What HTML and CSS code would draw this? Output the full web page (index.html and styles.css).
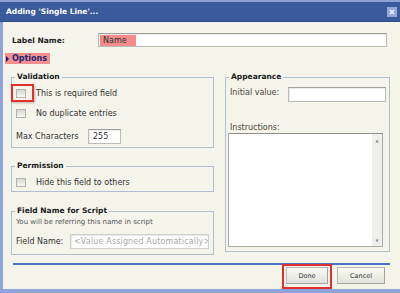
FILE: index.html
```html
<!DOCTYPE html>
<html lang="en">
<head>
    <meta charset="UTF-8">
    <title>Adding 'Single Line'...</title>
    <link rel="stylesheet" href="styles.css">
</head>
<body>

    <div class="dialog">
        <!-- Title bar -->
        <div class="titlebar">
            <span class="title">Adding 'Single Line'...</span>
            <span class="close">
                <svg width="10" height="10" viewBox="0 0 10 10">
                    <rect x="0" y="0" width="10" height="10" fill="#96a8d9"/>
                    <path d="M3 3 L7 7 M7 3 L3 7" stroke="#eef2ff" stroke-width="1.4"/>
                </svg>
            </span>
        </div>

        <div class="main">
            <div class="label-row">
                <span class="label-name">Label Name:</span>
                <div class="text-input wide"><span class="hl">Name</span></div>
            </div>

            <div class="options"><span class="arrow"></span>Options</div>

            <div class="columns">
                <div class="col">
                    <fieldset class="validation">
                        <legend>Validation</legend>
                        <div class="check-row first">
                            <span class="checkbox marked"></span>
                            <span>This is required field</span>
                        </div>
                        <div class="check-row second">
                            <span class="checkbox"></span>
                            <span>No duplicate entries</span>
                        </div>
                        <div class="field-row max">
                            <span>Max Characters</span>
                            <div class="text-input short">255</div>
                        </div>
                    </fieldset>

                    <fieldset class="permission">
                        <legend>Permission</legend>
                        <div class="check-row first">
                            <span class="checkbox"></span>
                            <span>Hide this field to others</span>
                        </div>
                    </fieldset>

                    <fieldset class="script">
                        <legend>Field Name for Script</legend>
                        <div class="hint">You will be referring this name in script</div>
                        <div class="field-row fname">
                            <span>Field Name:</span>
                            <div class="text-input auto"><span class="placeholder">&lt;Value Assigned Automatically&gt;</span></div>
                        </div>
                    </fieldset>
                </div>

                <fieldset class="appearance">
                    <legend>Appearance</legend>
                    <div class="field-row initial">
                        <span>Initial value:</span>
                        <div class="text-input init"></div>
                    </div>
                    <div class="instr-label">Instructions:</div>
                    <div class="textarea">
                        <div class="ta-body"></div>
                        <div class="scrollbar">
                            <span>&#9650;</span>
                            <span>&#9660;</span>
                        </div>
                    </div>
                </fieldset>
            </div>

            <div class="footer">
                <div class="separator"></div>
                <div class="buttons">
                    <button class="btn done">Done</button>
                    <button class="btn cancel">Cancel</button>
                </div>
            </div>
        </div>
    </div>

</body>
</html>
```

FILE: styles.css
```css
body {
    margin: 0;
    width: 400px;
    height: 293px;
    overflow: hidden;
    font-family: "DejaVu Sans", Verdana, sans-serif;
    font-size: 8px;
    color: #333;
}

.dialog {
    display: flex;
    flex-direction: column;
    height: 293px;
}

/* Title bar */
.titlebar {
    height: 19px;
    border-top: 2px solid #8ea1d6;
    border-bottom: 1px solid #2e4b8a;
    background-color: #3b5a9b;
    display: flex;
    align-items: center;
    justify-content: space-between;
    padding: 0 3px 0 6px;
}

.title {
    color: #ffffff;
    font-weight: bold;
    font-size: 7.5px;
}

.close {
    display: flex;
    margin-top: 1px;
}

/* Body */
.main {
    flex: 1;
    background-color: #f4f4ea;
    border-left: 3px solid #8fa2d9;
    border-bottom: 4px solid #8fa2d9;
    padding: 0 11px 0 8px;
    display: flex;
    flex-direction: column;
}

.label-row {
    display: flex;
    align-items: center;
    margin-top: 11px;
    height: 14px;
}

.label-name {
    font-weight: bold;
    font-size: 7.5px;
    color: #222;
    width: 86px;
    padding-left: 1px;
}

.text-input {
    box-sizing: border-box;
    background-color: #ffffff;
    border: 1px solid #bdbdb8;
    border-top-color: #9e9e9a;
    box-shadow: inset 1px 1px 0 #ebebeb;
    display: flex;
    align-items: center;
    overflow: hidden;
    white-space: nowrap;
    padding-left: 3px;
}

.text-input.wide {
    width: 289px;
    height: 14px;
    padding: 1px 0 0 1px;
    align-items: stretch;
}

.hl {
    background-color: #f28c8c;
    width: 33px;
    padding-left: 3px;
    display: flex;
    align-items: center;
}

.options {
    margin: 6px 0 0 -6px;
    height: 11px;
    width: 45px;
    background-color: #f48f8f;
    color: #1b2878;
    font-weight: bold;
    font-size: 8px;
    display: flex;
    align-items: center;
    box-sizing: border-box;
    padding-left: 1px;
}

.arrow {
    width: 0;
    height: 0;
    border-top: 3px solid transparent;
    border-bottom: 3px solid transparent;
    border-left: 3px solid #0e1a70;
    margin-right: 3px;
}

/* Columns */
.columns {
    display: grid;
    grid-template-columns: 203px 165px;
    column-gap: 11px;
    align-items: start;
    margin-top: 8px;
}

.col {
    display: flex;
    flex-direction: column;
}

fieldset {
    margin: 0;
    border: 1px solid #aebfcf;
    padding: 0 3px 0 3px;
    min-width: 0;
}

legend {
    font-weight: bold;
    font-size: 7.5px;
    line-height: 10px;
    color: #1a1a1a;
    padding: 0 2px;
}

.check-row {
    display: flex;
    align-items: center;
    height: 14px;
    padding-left: 1px;
}

.check-row.first {
    margin-top: 4px;
}

.check-row.second {
    margin-top: 6px;
}

.checkbox {
    position: relative;
    box-sizing: border-box;
    width: 10px;
    height: 9px;
    border: 1px solid #b2b2ae;
    background: linear-gradient(#d6d6d2, #f7f7f3);
    margin-right: 10px;
}

.checkbox.marked::after {
    content: "";
    position: absolute;
    left: -6px;
    top: -6px;
    width: 19px;
    height: 14px;
    border: 2px solid #e3302e;
    box-shadow: 1px 1px 2px rgba(0, 0, 0, 0.25);
}

.field-row {
    display: flex;
    align-items: center;
    padding-left: 1px;
}

.field-row.max {
    margin-top: 9px;
    height: 15px;
}

.field-row.max span {
    width: 72px;
}

.text-input.short {
    width: 33px;
    height: 15px;
    font-size: 8px;
    padding-left: 4px;
}

.validation {
    padding-bottom: 3px;
}

.permission {
    margin-top: 13px;
    padding-bottom: 2px;
}

.script {
    margin-top: 14px;
    padding-bottom: 5px;
}

.hint {
    font-size: 7px;
    line-height: 8px;
    margin-top: 2px;
    padding-left: 1px;
    color: #555;
}

.field-row.fname {
    margin-top: 8px;
    height: 15px;
}

.field-row.fname span:first-child {
    width: 54px;
}

.text-input.auto {
    width: 139px;
    height: 15px;
    border-color: #cfcfca;
}

.placeholder {
    color: #a9a9a6;
    font-size: 8px;
    letter-spacing: 0.15px;
}

/* Appearance */
.appearance {
    padding-bottom: 4px;
}

.field-row.initial {
    margin-top: 5px;
    height: 15px;
    align-items: flex-start;
    color: #4a4538;
}

.field-row.initial span {
    width: 58px;
    padding-top: 1px;
}

.text-input.init {
    width: 98px;
    height: 15px;
}

.instr-label {
    margin-top: 21px;
    line-height: 10px;
    padding-left: 1px;
    color: #4a4538;
}

.textarea {
    box-sizing: border-box;
    width: 155px;
    height: 114px;
    margin-left: -1px;
    border: 1px solid #aaaaa6;
    border-top-color: #8e8e8a;
    background-color: #ffffff;
    display: flex;
}

.ta-body {
    flex: 1;
}

.scrollbar {
    width: 10px;
    background-color: #efefed;
    display: flex;
    flex-direction: column;
    justify-content: space-between;
    align-items: center;
    color: #8a8a88;
    font-size: 4px;
    padding: 4px 0 3px;
}

/* Footer */
.footer {
    margin: 8px -1px 0 2px;
    display: flex;
    flex-direction: column;
}

.separator {
    height: 2px;
    background-color: #4b72c8;
}

.buttons {
    display: flex;
    justify-content: flex-end;
    gap: 9px;
    margin-top: 2px;
    padding-right: 5px;
}

.btn {
    position: relative;
    height: 17px;
    border: 1px solid #b9b9b2;
    border-right-color: #a4a49e;
    border-bottom-color: #a4a49e;
    background: linear-gradient(#fafaf6, #e2e2dc);
    font-family: "DejaVu Sans", Verdana, sans-serif;
    font-size: 6.5px;
    color: #333;
    padding: 0;
}

.btn.done {
    width: 42px;
}

.btn.cancel {
    width: 48px;
}

.btn.done::after {
    content: "";
    position: absolute;
    left: -5px;
    top: -4px;
    width: 46px;
    height: 21px;
    border: 2px solid #e3302e;
}
```
